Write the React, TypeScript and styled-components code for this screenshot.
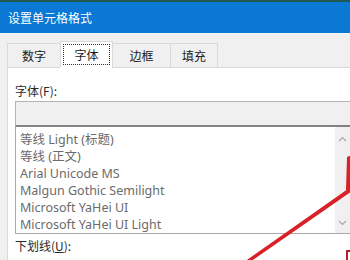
import React from "react";
import styled, { createGlobalStyle } from "styled-components";

const Global = createGlobalStyle`
  html, body { margin: 0; padding: 0; background: #f0f0f0; overflow: hidden; }
  * { box-sizing: border-box; }
`;

const Window = styled.div`
  position: relative;
  width: 350px;
  height: 260px;
  overflow: hidden;
  background: #f0f0f0;
  display: flex;
  flex-direction: column;
  font-family: "Noto Sans CJK SC", "Noto Sans", sans-serif;
`;

const TitleBar = styled.div`
  height: 33px;
  flex: none;
  border-top: 2px solid #1e5a52;
  background: #0a78d4;
  color: #ffffff;
  font-size: 12px;
  display: flex;
  align-items: center;
  padding-left: 8px;
`;

const Body = styled.div`
  flex: 1;
  display: flex;
  flex-direction: column;
  padding: 7px 0 0 7px;
  border-top: 1px solid #f6f6f6;
`;

const TabRow = styled.div`
  display: flex;
  align-items: flex-end;
  height: 27px;
  position: relative;
  z-index: 1;
  margin-bottom: -1px;
`;

const Tab = styled.div<{ $w: number; $selected?: boolean }>`
  width: ${(p) => p.$w}px;
  height: ${(p) => (p.$selected ? 27 : 25)}px;
  background: ${(p) => (p.$selected ? "#ffffff" : "#f0f0f0")};
  border: 1px solid #d9d9d9;
  border-bottom: ${(p) => (p.$selected ? "1px solid #ffffff" : "1px solid #d9d9d9")};
  margin-left: -1px;
  &:first-child { margin-left: 0; }
  display: flex;
  align-items: center;
  justify-content: center;
  font-size: 12px;
  color: #1a1a1a;
  padding: ${(p) => (p.$selected ? "2px" : "0")};
`;

const Focus = styled.div`
  width: 100%;
  height: 100%;
  border: 1px dotted #333;
  display: flex;
  align-items: center;
  justify-content: center;
`;

const Panel = styled.div`
  flex: 1;
  background: #ffffff;
  border: 1px solid #d9d9d9;
  border-right: none;
  border-bottom: none;
  padding: 15px 0 0 7px;
  display: flex;
  flex-direction: column;
`;

const Label = styled.div`
  font-size: 12px;
  line-height: 16px;
  height: 16px;
  color: #2a2a2a;
  u { text-decoration: underline; }
`;

const FontInput = styled.div`
  width: 345px;
  height: 26px;
  margin-top: 2px;
  background: #f0f0f0;
  border: 1px solid #b4b4b4;
  border-bottom: 2px solid #838383;
`;

const ListBox = styled.div`
  width: 336px;
  height: 107px;
  border: 1px solid #a9a9a9;
  border-top: none;
  display: flex;
`;

const Items = styled.div`
  flex: 1;
  padding: 4px 0 0 4px;
  display: flex;
  flex-direction: column;
`;

const Item = styled.div`
  height: 17px;
  line-height: 17px;
  font-size: 12.5px;
  color: #6b6b6b;
  font-family: "Noto Sans", "Noto Sans CJK SC", sans-serif;
  white-space: nowrap;
`;

const ScrollBar = styled.div`
  width: 15px;
  background: #f0f0f0;
  display: flex;
  flex-direction: column;
  justify-content: space-between;
  align-items: center;
  padding: 9px 0 7px;
`;

const Bottom = styled.div`
  margin-top: 4px;
`;

const Overlay = styled.svg`
  position: absolute;
  left: 0;
  top: 0;
  pointer-events: none;
`;

const Chevron = ({ up }: { up?: boolean }) => (
  <svg width="9" height="6" viewBox="0 0 9 6">
    <path
      d={up ? "M1 5 L4.5 1.5 L8 5" : "M1 1 L4.5 4.5 L8 1"}
      fill="none"
      stroke="#a6a6a6"
      strokeWidth="1.2"
    />
  </svg>
);

const fonts = [
  "等线 Light (标题)",
  "等线 (正文)",
  "Arial Unicode MS",
  "Malgun Gothic Semilight",
  "Microsoft YaHei UI",
  "Microsoft YaHei UI Light",
];

export default function App() {
  return (
    <>
      <Global />
      <Window>
        <TitleBar>设置单元格格式</TitleBar>
        <Body>
          <TabRow>
            <Tab $w={54}>数字</Tab>
            <Tab $w={53} $selected>
              <Focus>字体</Focus>
            </Tab>
            <Tab $w={59}>边框</Tab>
            <Tab $w={48}>填充</Tab>
          </TabRow>
          <Panel>
            <Label>字体(F):</Label>
            <FontInput />
            <ListBox>
              <Items>
                {fonts.map((f) => (
                  <Item key={f}>{f}</Item>
                ))}
              </Items>
              <ScrollBar>
                <Chevron up />
                <Chevron />
              </ScrollBar>
            </ListBox>
            <Bottom>
              <Label>
                下划线(<u>U</u>):
              </Label>
            </Bottom>
          </Panel>
        </Body>
        <Overlay width="350" height="260" viewBox="0 0 350 260">
          <polygon points="244,262 250,262 352,191 352,186" fill="#d8222a" />
          <polygon points="347,157 352,155 352,192 346,190" fill="#d8222a" />
          <path d="M347 261 V251 H352" fill="none" stroke="#b3202a" strokeWidth="2" />
        </Overlay>
      </Window>
    </>
  );
}
